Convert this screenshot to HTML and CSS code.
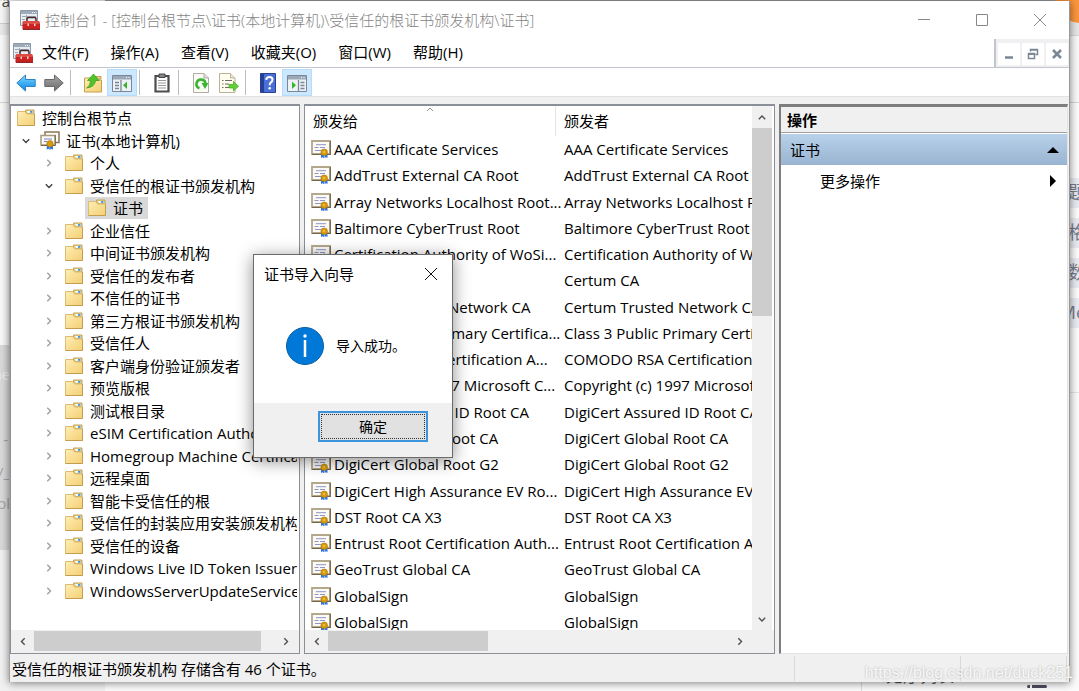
FILE: index.html
```html
<!DOCTYPE html>
<html lang="zh-CN">
<head>
<meta charset="utf-8">
<title>控制台1</title>
<link rel="stylesheet" href="styles.css">
</head>
<body>
<svg class="defs" width="0" height="0" aria-hidden="true">
  <defs>
    <linearGradient id="gFold" x1="0" y1="0" x2="1" y2="1"><stop offset="0" stop-color="#ffeeb4"/><stop offset="1" stop-color="#f3cf74"/></linearGradient>
    <linearGradient id="gBlue" x1="0" y1="0" x2="0" y2="1"><stop offset="0" stop-color="#8fd8fc"/><stop offset=".5" stop-color="#3fb0f5"/><stop offset="1" stop-color="#1583dc"/></linearGradient>
    <linearGradient id="gGray" x1="0" y1="0" x2="0" y2="1"><stop offset="0" stop-color="#a8a8a8"/><stop offset="1" stop-color="#6a6a6a"/></linearGradient>
  </defs>
  <symbol id="folder" viewBox="0 0 18 18">
    <path d="M8.500 4V1h8.500v4z" fill="#eed185" stroke="#c0a25c"/>
    <path d="M.500 2.500h7.500l1.500 2.500h8v11.500H.500z" fill="url(#gFold)" stroke="#dcbc70"/>
    <path d="M10.500 2h5.500v1.800h-5.500z" fill="#fff"/><path d="M13 2h2.500v1.800H13z" fill="#3f97d8"/>
    <path d="M17.500 5v11.500H.500" fill="none" stroke="#c49d50"/>
  </symbol>
  <symbol id="cert" viewBox="0 0 20 18">
    <path d="M1 1h18v13H1z" fill="#fbfaf6" stroke="#b3a78c" stroke-width="1.800"/>
    <path d="M19.300 1v13.500H1" fill="none" stroke="#75664a" stroke-width="1.200"/>
    <path d="M5 4.700h10M3.500 7.500h4M9 7.500h5M4 10.500h6" stroke="#8d95c9" stroke-width="1" fill="none"/>
    <path d="M10 14v4l1.500-.8 1.500.8v-4zM13.500 14v4l1.500-.8 1.500.8v-4z" fill="#2f74e0"/>
    <circle cx="13.200" cy="12.300" r="3.300" fill="#d99b0b" stroke="#a87408" stroke-width=".6"/>
    <circle cx="13" cy="12" r="1" fill="#f2c848"/>
  </symbol>
  <symbol id="certs" viewBox="0 0 20 19">
    <path d="M5 1h14v10.500H5z" fill="#fffdf8" stroke="#8b7754" stroke-width="1.500"/>
    <path d="M1 4.500h14v9.500H1z" fill="#fbfaf6" stroke="#a89a7d" stroke-width="1.500"/>
    <path d="M15.300 4v10.500H1" fill="none" stroke="#75664a"/>
    <path d="M4 8h8M4 10.500h3" stroke="#7480cf" fill="none"/>
    <path d="M6.700 14v4.700l1.500-1 1.500 1V14zM10 14v4.700l1.500-1 1.500 1V14z" fill="#2f74e0"/>
    <circle cx="10" cy="12.800" r="3.200" fill="#d99b0b" stroke="#a87408" stroke-width=".6"/>
  </symbol>
  <symbol id="mmc" viewBox="0 0 20 20">
    <path d="M.500.500h17v15H.500z" fill="#e7ecf1" stroke="#8b98a6"/>
    <path d="M1 1h16v3H1z" fill="#9dabb9"/><path d="M12 2.500h1M14 2.500h1M16 2.500h.5" stroke="#fff"/>
    <path d="M2 6.500h14M2 9.500h3M2 12.500h2M6.500 5v5" stroke="#9aa8b6"/>
    <path d="M7 11V9q0-1.500 1.500-1.500h6Q16 7.500 16 9v2" fill="none" stroke="#4c2928" stroke-width="1.500"/>
    <path d="M3.500 11h15.500l1 3v5.500H2.500V14z" fill="#cc2222"/><path d="M3.500 11h15.500l1 3H2.500z" fill="#df4a43"/>
    <path d="M3 19.300h17" stroke="#7c1012"/><path d="M7.500 13.500h1.500v2.500H7.500zM14 13.500h1.500v2.500H14z" fill="#e9d4d2"/>
  </symbol>
  <symbol id="chev" viewBox="0 0 8 8"><path d="M2.300.8 5.500 4 2.300 7.200" fill="none" stroke="currentColor" stroke-width="1.400"/></symbol>
</svg>

<div class="backdrop" aria-hidden="true">
  <div class="bd-left"><span class="bd-frag bd-ra">.ra</span><span class="bd-frag bd-ne">ne</span><span class="bd-frag bd-dash">-</span><span class="bd-frag bd-w">/_</span><span class="bd-frag bd-ol">ol</span></div>
  <div class="bd-right">
    <span class="bd-chip">标题</span><span class="bd-chip">表格</span><span class="bd-chip">数</span><span class="bd-chip">Me</span>
  </div>
  <div class="bd-orange"></div>
  <div class="bd-bottom"><span class="bd-list">无序列表</span><span class="bd-line"></span></div>
</div>

<main class="window">
  <header class="titlebar">
    <svg class="i-mmc"><use href="#mmc"/></svg>
    <h1 class="title">控制台1 - [控制台根节点\证书(本地计算机)\受信任的根证书颁发机构\证书]</h1>
    <div class="winbtns">
      <button aria-label="最小化"><svg viewBox="0 0 12 12"><path d="M0 5.500h12"/></svg></button>
      <button aria-label="最大化"><svg viewBox="0 0 12 12"><path d="M.5.5h11v11H.5z"/></svg></button>
      <button aria-label="关闭"><svg viewBox="0 0 12 12"><path d="M0 0l12 12M12 0L0 12"/></svg></button>
    </div>
  </header>

  <nav class="menubar">
    <svg class="i-mmc"><use href="#mmc"/></svg>
    <div class="menus"><button>文件(F)</button><button>操作(A)</button><button>查看(V)</button><button>收藏夹(O)</button><button>窗口(W)</button><button>帮助(H)</button></div>
    <div class="mdibtns">
      <button aria-label="最小化子窗口"><svg viewBox="0 0 12 12"><path d="M2 9.500h8" stroke-width="2.500"/></svg></button>
      <button aria-label="还原子窗口"><svg viewBox="0 0 12 12"><path d="M3.500 3.500V1.500h7v5h-2M3.500 2h7" stroke-width="1.500"/><path d="M1.500 5.500h6v5h-6zM1.500 6.200h6" stroke-width="1.500"/></svg></button>
      <button aria-label="关闭子窗口"><svg viewBox="0 0 12 12"><path d="M2 2l8 8M10 2l-8 8" stroke-width="2.500"/></svg></button>
    </div>
  </nav>

  <div class="toolbar">
    <button aria-label="后退"><svg viewBox="0 0 20 20"><path d="M.8 10 9.500 2v4.500h9.700v7H9.500V18z" fill="url(#gBlue)" stroke="#2b83c6"/></svg></button>
    <button aria-label="前进"><svg viewBox="0 0 20 20"><path d="M19.200 10 10.500 2v4.500H.8v7h9.700V18z" fill="url(#gGray)" stroke="#6a6a6a"/></svg></button>
    <i class="sep"></i>
    <button aria-label="上移一级"><svg viewBox="0 0 20 20"><path d="M11 6V3.500h7V6z" fill="#eed185" stroke="#c0a25c"/><path d="M1.500 5h6l2 2h9v12h-17z" fill="url(#gFold)" stroke="#c9a04c"/><path d="M3.500 15Q7.500 13 7.500 7.500H4.500L10.500 1l5.500 6.500h-3.500Q12 14 3.500 15z" fill="#4fc52b" stroke="#329a1b" stroke-width=".7"/></svg></button>
    <button class="on" aria-label="显示控制台树" aria-pressed="true"><svg viewBox="0 0 20 20"><path d="M.5 2.500h19v16H.5z" fill="#eef1f5" stroke="#7a8796"/><path d="M1 3h18v3.500H1z" fill="#9aa8b8"/><path d="M14 4.500h1M16.500 4.500h1" stroke="#fff"/><path d="M9 7v11M3 9.500h4M3 12.500h4M3 15.500h4" stroke="#7a8796" stroke-width="1.300"/><path d="M15 8.500v7.500l-4-3.700z" fill="#39b52a"/></svg></button>
    <i class="sep"></i>
    <button aria-label="复制"><svg viewBox="0 0 20 20"><path d="M3.500 3h13v15.500h-13z" fill="#fff" stroke="#4c4c4c" stroke-width="2.200"/><path d="M7 1h6v3.500H7z" fill="#888" stroke="#444"/><path d="M6 7.500h8M6 10h8M6 12.500h8M6 15h8" stroke="#9a9a9a"/></svg></button>
    <i class="sep"></i>
    <button aria-label="刷新"><svg viewBox="0 0 20 20"><path d="M2.500.500h10.500l4.500 4.500v14.500h-15z" fill="#fbfbf6" stroke="#b0aca0"/><path d="M13 .5V5h4.500" fill="#ddd" stroke="#b0aca0"/><path d="M8.500 15.300A4.500 4.500 0 1 1 14.500 11" fill="none" stroke="#38b531" stroke-width="2.600"/><path d="M17.500 10h-7l3.500 6z" fill="#38b531"/></svg></button>
    <button aria-label="导出列表"><svg viewBox="0 0 20 20"><path d="M.500.500h11l4.500 4.500v14.500H.500z" fill="#fffdf0" stroke="#b9b398"/><path d="M11.500.5V5H16" fill="#eee8cf" stroke="#b9b398"/><path d="M3 7.500h1.500M6 7.500h7M3 11h1.500M6 11h4M3 14.500h1.500M6 14.500h4" stroke="#6d6b62"/><path d="M10 11.500h4.500V8.500l5 4.700-5 4.800v-3H10z" fill="#62cf37" stroke="#3ea620" stroke-width=".7"/></svg></button>
    <i class="sep"></i>
    <button aria-label="帮助"><svg viewBox="0 0 20 20"><path d="M2.500.500h15v19h-15z" fill="#4a6fd6" stroke="#28408f"/><path d="M3 1h3v18H3z" fill="#263f98"/><path d="M8.200 6.800Q8.500 4 11.500 4t3 2.700q0 1.700-1.600 2.700-1.200.8-1.200 2.800" fill="none" stroke="#fff" stroke-width="2"/><circle cx="11.700" cy="15.300" r="1.300" fill="#fff"/></svg></button>
    <button class="on" aria-label="显示操作窗格" aria-pressed="true"><svg viewBox="0 0 20 20"><path d="M.5 2.500h19v16H.5z" fill="#eef1f5" stroke="#7a8796"/><path d="M1 3h18v3.500H1z" fill="#9aa8b8"/><path d="M14 4.500h1M16.500 4.500h1" stroke="#fff"/><path d="M11.500 7v11M13.500 9.500h4M13.500 12.500h4M13.500 15.500h4" stroke="#7a8796" stroke-width="1.300"/><path d="M5 8.500v7.500l4-3.700z" fill="#39b52a"/></svg></button>
  </div>

  <div class="panes">
    <section class="pane tree-pane" aria-label="控制台树">
      <ul class="tree">
        <li class="l0"><svg class="i-f"><use href="#folder"/></svg><span>控制台根节点</span></li>
        <li class="l1 open"><svg class="i-c"><use href="#chev"/></svg><svg class="i-certs"><use href="#certs"/></svg><span>证书(本地计算机)</span></li>
        <li class="l2"><svg class="i-c"><use href="#chev"/></svg><svg class="i-f"><use href="#folder"/></svg><span>个人</span></li>
        <li class="l2 open"><svg class="i-c"><use href="#chev"/></svg><svg class="i-f"><use href="#folder"/></svg><span>受信任的根证书颁发机构</span></li>
        <li class="l3"><div class="sel"><svg class="i-f"><use href="#folder"/></svg><span>证书</span></div></li>
        <li class="l2"><svg class="i-c"><use href="#chev"/></svg><svg class="i-f"><use href="#folder"/></svg><span>企业信任</span></li>
        <li class="l2"><svg class="i-c"><use href="#chev"/></svg><svg class="i-f"><use href="#folder"/></svg><span>中间证书颁发机构</span></li>
        <li class="l2"><svg class="i-c"><use href="#chev"/></svg><svg class="i-f"><use href="#folder"/></svg><span>受信任的发布者</span></li>
        <li class="l2"><svg class="i-c"><use href="#chev"/></svg><svg class="i-f"><use href="#folder"/></svg><span>不信任的证书</span></li>
        <li class="l2"><svg class="i-c"><use href="#chev"/></svg><svg class="i-f"><use href="#folder"/></svg><span>第三方根证书颁发机构</span></li>
        <li class="l2"><svg class="i-c"><use href="#chev"/></svg><svg class="i-f"><use href="#folder"/></svg><span>受信任人</span></li>
        <li class="l2"><svg class="i-c"><use href="#chev"/></svg><svg class="i-f"><use href="#folder"/></svg><span>客户端身份验证颁发者</span></li>
        <li class="l2"><svg class="i-c"><use href="#chev"/></svg><svg class="i-f"><use href="#folder"/></svg><span>预览版根</span></li>
        <li class="l2"><svg class="i-c"><use href="#chev"/></svg><svg class="i-f"><use href="#folder"/></svg><span>测试根目录</span></li>
        <li class="l2"><svg class="i-c"><use href="#chev"/></svg><svg class="i-f"><use href="#folder"/></svg><span>eSIM Certification Authorities</span></li>
        <li class="l2"><svg class="i-c"><use href="#chev"/></svg><svg class="i-f"><use href="#folder"/></svg><span>Homegroup Machine Certificates</span></li>
        <li class="l2"><svg class="i-c"><use href="#chev"/></svg><svg class="i-f"><use href="#folder"/></svg><span>远程桌面</span></li>
        <li class="l2"><svg class="i-c"><use href="#chev"/></svg><svg class="i-f"><use href="#folder"/></svg><span>智能卡受信任的根</span></li>
        <li class="l2"><svg class="i-c"><use href="#chev"/></svg><svg class="i-f"><use href="#folder"/></svg><span>受信任的封装应用安装颁发机构</span></li>
        <li class="l2"><svg class="i-c"><use href="#chev"/></svg><svg class="i-f"><use href="#folder"/></svg><span>受信任的设备</span></li>
        <li class="l2"><svg class="i-c"><use href="#chev"/></svg><svg class="i-f"><use href="#folder"/></svg><span>Windows Live ID Token Issuer</span></li>
        <li class="l2"><svg class="i-c"><use href="#chev"/></svg><svg class="i-f"><use href="#folder"/></svg><span>WindowsServerUpdateServices</span></li>
      </ul>
      <div class="hscroll"><svg class="arr left"><use href="#chev"/></svg><div class="track"><div class="thumb tree-thumb"></div></div><svg class="arr"><use href="#chev"/></svg></div>
    </section>

    <section class="pane list-pane" aria-label="证书列表">
      <div class="list-main">
        <div class="list-view">
          <table class="certs">
            <thead><tr><th scope="col">颁发给<svg class="sort" viewBox="0 0 8 5"><path d="M1 4l3-3 3 3"/></svg></th><th scope="col">颁发者</th></tr></thead>
            <tbody>
              <tr><td><svg class="i-cert"><use href="#cert"/></svg><span>AAA Certificate Services</span></td><td>AAA Certificate Services</td></tr>
              <tr><td><svg class="i-cert"><use href="#cert"/></svg><span>AddTrust External CA Root</span></td><td>AddTrust External CA Root</td></tr>
              <tr><td><svg class="i-cert"><use href="#cert"/></svg><span>Array Networks Localhost Root...</span></td><td>Array Networks Localhost Root</td></tr>
              <tr><td><svg class="i-cert"><use href="#cert"/></svg><span>Baltimore CyberTrust Root</span></td><td>Baltimore CyberTrust Root</td></tr>
              <tr><td><svg class="i-cert"><use href="#cert"/></svg><span>Certification Authority of WoSi...</span></td><td>Certification Authority of WoSign</td></tr>
              <tr><td><svg class="i-cert"><use href="#cert"/></svg><span>Certum CA</span></td><td>Certum CA</td></tr>
              <tr><td><svg class="i-cert"><use href="#cert"/></svg><span>Certum Trusted Network CA</span></td><td>Certum Trusted Network CA</td></tr>
              <tr><td><svg class="i-cert"><use href="#cert"/></svg><span>Class 3 Public Primary Certifica...</span></td><td>Class 3 Public Primary Certificat</td></tr>
              <tr><td><svg class="i-cert"><use href="#cert"/></svg><span>COMODO RSA Certification A...</span></td><td>COMODO RSA Certification Au</td></tr>
              <tr><td><svg class="i-cert"><use href="#cert"/></svg><span>Copyright (c) 1997 Microsoft C...</span></td><td>Copyright (c) 1997 Microsoft C</td></tr>
              <tr><td><svg class="i-cert"><use href="#cert"/></svg><span>DigiCert Assured ID Root CA</span></td><td>DigiCert Assured ID Root CA</td></tr>
              <tr><td><svg class="i-cert"><use href="#cert"/></svg><span>DigiCert Global Root CA</span></td><td>DigiCert Global Root CA</td></tr>
              <tr><td><svg class="i-cert"><use href="#cert"/></svg><span>DigiCert Global Root G2</span></td><td>DigiCert Global Root G2</td></tr>
              <tr><td><svg class="i-cert"><use href="#cert"/></svg><span>DigiCert High Assurance EV Ro...</span></td><td>DigiCert High Assurance EV Root</td></tr>
              <tr><td><svg class="i-cert"><use href="#cert"/></svg><span>DST Root CA X3</span></td><td>DST Root CA X3</td></tr>
              <tr><td><svg class="i-cert"><use href="#cert"/></svg><span>Entrust Root Certification Auth...</span></td><td>Entrust Root Certification Authority</td></tr>
              <tr><td><svg class="i-cert"><use href="#cert"/></svg><span>GeoTrust Global CA</span></td><td>GeoTrust Global CA</td></tr>
              <tr><td><svg class="i-cert"><use href="#cert"/></svg><span>GlobalSign</span></td><td>GlobalSign</td></tr>
              <tr><td><svg class="i-cert"><use href="#cert"/></svg><span>GlobalSign</span></td><td>GlobalSign</td></tr>
            </tbody>
          </table>
        </div>
        <div class="vscroll"><svg class="arr up"><use href="#chev"/></svg><div class="track vtrack"><div class="thumb list-vthumb"></div></div><svg class="arr down"><use href="#chev"/></svg></div>
      </div>
      <div class="hscroll list-h"><svg class="arr left"><use href="#chev"/></svg><div class="track"><div class="thumb list-thumb"></div></div><svg class="arr"><use href="#chev"/></svg></div>
    </section>

    <aside class="actions">
      <h2 class="act-head">操作</h2>
      <button class="act-group">证书<svg viewBox="0 0 12 12"><path d="M0 9l6-6 6 6z"/></svg></button>
      <button class="act-item">更多操作<svg viewBox="0 0 12 12"><path d="M3 0l6 6-6 6z"/></svg></button>
    </aside>
  </div>

  <footer class="status"><span class="status-text">受信任的根证书颁发机构 存储含有 46 个证书。</span><i></i><i></i></footer>
</main>

<div class="dialog" role="dialog" aria-labelledby="dlg-title">
  <div class="dlg-head"><h2 id="dlg-title">证书导入向导</h2><button class="dlg-x" aria-label="关闭"><svg viewBox="0 0 12 12"><path d="M0 0l12 12M12 0L0 12"/></svg></button></div>
  <div class="dlg-body"><svg class="i-info" viewBox="0 0 38 38"><circle cx="19" cy="19" r="18.500" fill="#0078d7" stroke="#0b5fa5"/><path d="M19 13v17" stroke="#fff" stroke-width="2.500"/><circle cx="19" cy="9" r="1.700" fill="#fff"/></svg><p>导入成功。</p></div>
  <div class="dlg-foot"><button class="ok">确定</button></div>
</div>
<div class="watermark">https://blog.csdn.net/duck251</div>
</body>
</html>
```
FILE: styles.css
```css
* { box-sizing: border-box; }
html, body { height: 100%; }
body {
  margin: 0;
  position: relative;
  overflow: hidden;
  display: flex;
  padding: 1px 9px 9px;
  background: #fbfbfb;
  color: #000;
  font: 15px/22px "Open Sans", "Noto Sans CJK SC", sans-serif;
}
button { font: inherit; color: inherit; border: 0; padding: 0; background: none; display: flex; align-items: center; justify-content: center; }
h1, h2, p, ul { margin: 0; padding: 0; font: inherit; }
svg { display: block; flex: none; }
.defs { position: absolute; }

/* page behind the window */
.backdrop { position: absolute; inset: 0; overflow: hidden; color: #777b8c; background: linear-gradient(#999 0 1px, transparent 1px); }
.bd-left { position: absolute; left: 0; top: 0; bottom: 0; width: 105px; background: linear-gradient(#f6f6f6 0 23px, #cfcfcf 23px 24px, #e9e9e9 24px 35px, #f8f8f8 35px 102px, #d5d5d5 102px 103px, #f8f8f8 103px 345px, #d9d9d9 345px 550px, #f1f1f1 550px); }
.bd-frag { position: absolute; right: 95px; color: #a5a5a5; line-height: 20px; }
.bd-ra { top: -9px; color: #444; }
.bd-ne { top: 364px; color: #eee; }
.bd-dash { top: 429px; right: 97px; }
.bd-w { top: 462px; }
.bd-ol { top: 493px; }
.bd-right { position: absolute; right: 0; top: 0; bottom: 0; width: 12px; padding-top: 178px; display: flex; flex-direction: column; align-items: flex-end; gap: 10px; background: linear-gradient(#e6e6e6 0 35px, #d5d5d5 35px 36px, #f8f8f8 36px 102px, #d5d5d5 102px 103px, transparent 103px 392px, #e5e5e5 392px 393px, transparent 393px); }
.bd-chip { height: 30px; line-height: 28px; background: #e9ebf2; font-size: 18px; white-space: nowrap; margin-right: -7px; padding-left: 12px; }
.bd-orange { position: absolute; right: -26px; top: -27px; width: 50px; height: 50px; border-radius: 50%; background: #fb963c; }
.bd-bottom { position: absolute; left: 861px; right: 0; bottom: 0; height: 30px; padding: 4px 32px 0 24px; border-left: 1px solid #ddd; display: flex; justify-content: space-between; font-size: 17px; color: #555; }
.bd-line { width: 20px; height: 3px; margin-top: 20px; border-radius: 2px; background: linear-gradient(90deg, #4c4c60 0 3px, transparent 3px 5px, #4c4c60 5px); }

/* console window */
.window { position: relative; flex: 1; min-width: 0; display: flex; flex-direction: column; background: #f0f0f0; border-left: 1px solid #a0a0a0; border-right: 1px solid #999; box-shadow: 0 1px 8px rgba(0, 0, 0, .5); }
.titlebar { height: 38px; flex: none; display: flex; align-items: center; background: #fff; padding-left: 10px; gap: 5px; }
.i-mmc { width: 20px; height: 20px; }
.title { flex: 1; color: #858585; font-weight: 300; white-space: nowrap; }
.winbtns { display: flex; }
.winbtns button { width: 58px; height: 38px; }
.winbtns svg, .dlg-x svg { width: 12px; height: 12px; fill: none; stroke: #888; }
.menubar { height: 29px; flex: none; display: flex; align-items: center; background: #fff; padding-left: 3px; border-bottom: 1px solid #c0c6cc; }
.menus { flex: 1; display: flex; gap: 22px; padding: 0 0 2px 9px; white-space: nowrap; }
.mdibtns { display: flex; align-self: stretch; align-items: center; gap: 2px; padding: 2px 1px 0 2px; border-left: 2px solid #c0c6cc; background: #f0f0f3; }
.mdibtns button { width: 22px; height: 22px; background: #fff; }
.mdibtns svg { width: 12px; height: 12px; fill: none; stroke: #7b8794; }
.toolbar { height: 29px; flex: none; display: flex; align-items: center; background: #fff; border-bottom: 1px solid #e3e3e3; padding: 1px 0 0 2px; }
.toolbar button { width: 28px; height: 27px; }
.toolbar button svg { width: 20px; height: 20px; }
.toolbar .on { width: 30px; background: #cce8ff; border: 1px solid #b5dcfa; }
.sep { width: 1px; height: 25px; margin: 0 8px 0 2px; background: #bdbdbd; }

.panes { flex: 1; min-height: 0; display: grid; grid-template-columns: 290px minmax(0, 471px) minmax(0, 1fr); gap: 4px; padding: 7px 1px 0 0; }
.pane { min-width: 0; min-height: 0; display: flex; flex-direction: column; background: #fff; border: 1px solid #8a8f98; border-top-width: 2px; overflow: hidden; }
.tree { flex: 1; min-height: 0; display: grid; grid-auto-rows: 1fr; list-style: none; padding: 1px 0 28px; margin-right: 2px; overflow: hidden; }
.tree li { display: flex; align-items: center; white-space: nowrap; min-height: 0; }
.i-f { width: 18px; height: 18px; margin-right: 7px; }
.i-certs { width: 20px; height: 19px; margin: 0 6px 0 5px; }
.i-c { width: 8px; height: 8px; margin-right: 12px; color: #a0a0a0; }
.open .i-c { transform: rotate(90deg); color: #404040; }
.open .i-certs { margin-left: -2px; }
.l0 { padding-left: 6px; }
.l1 { padding-left: 11px; }
.l2 { padding-left: 34px; }
.l3 { padding-left: 74px; }
.sel { display: flex; align-items: center; background: #d9d9d9; padding: 0 5px 0 3px; }

.hscroll { height: 23px; flex: none; display: flex; align-items: center; gap: 7px; padding: 1px 9px 2px 8px; background: #f0f0f0; }
.track { flex: 1; align-self: stretch; min-width: 0; min-height: 0; }
.vtrack { align-self: auto; width: 20px; }
.thumb { height: 100%; background: #cdcdcd; }
.tree-thumb { width: 94%; }
.list-thumb { width: 40%; }
.list-h { padding-right: 30px; }
.arr { width: 8px; height: 9px; color: #505050; }
.left { transform: rotate(180deg); }
.up { transform: rotate(-90deg); }
.down { transform: rotate(90deg); }
.list-main { flex: 1; min-height: 0; display: flex; }
.list-view { flex: 1; min-width: 0; overflow: hidden; display: flex; }
.vscroll { width: 20px; flex: none; display: flex; flex-direction: column; align-items: center; gap: 6px; padding: 7px 0 6px; background: #f0f0f0; margin-right: 2px; }
.thumb.list-vthumb { height: 39%; }

.certs { flex: 1; min-width: 0; display: flex; flex-direction: column; margin-bottom: -5px; }
.certs thead, .certs td, .certs th { display: block; }
.certs tr { display: grid; grid-template-columns: 251px minmax(0, 1fr); min-height: 0; }
.certs tbody { flex: 1; min-height: 0; display: grid; grid-auto-rows: 1fr; }
.certs th { height: 30px; padding: 4px 8px 0; text-align: left; font-weight: 400; position: relative; }
.certs th:first-child { border-right: 1px solid #e5e5e5; }
.sort { position: absolute; left: calc(50% - 4px); top: 1px; width: 8px; height: 5px; fill: none; stroke: #909090; }
.certs td { display: flex; align-items: center; padding: 0 0 0 8px; line-height: 20px; white-space: nowrap; min-width: 0; }
.certs td:first-child { padding-left: 6px; gap: 3px; }
.i-cert { width: 20px; height: 18px; }

.actions { min-width: 0; background: #fff; border: 1px solid #e3e3e3; border-top: 3px solid #7d7d7d; border-left: 2px solid #7d7d7d; display: flex; flex-direction: column; }
.act-head { height: 26px; line-height: 26px; padding-left: 6px; font-weight: 700; background: #f0f0f0; border-bottom: 1px solid #a0a0a0; }
.act-group, .act-item { justify-content: space-between; height: 31px; padding: 0 8px 0 9px; text-align: left; }
.act-group { margin-top: 1px; background: linear-gradient(#b9d1ea, #99b4d1); }
.act-item { padding-left: 39px; }
.actions svg { width: 12px; height: 12px; }

.status { height: 28px; flex: none; display: flex; align-items: center; padding: 2px 2px 1px; }
.status-text { flex: 1; }
.status i { align-self: stretch; width: 166px; border-left: 1px solid #d9d9d9; }
.status i:last-child { width: 107px; border-right: 1px solid #d9d9d9; }

/* message box floating over the console */
.dialog { position: absolute; left: 253px; top: 254px; width: 200px; display: flex; flex-direction: column; background: #fff; border: 1px solid #6a6a6a; box-shadow: 0 3px 16px rgba(0, 0, 0, .45); }
.dlg-head { height: 38px; display: flex; align-items: center; justify-content: space-between; padding: 0 15px 0 10px; }
.dlg-x svg { stroke: #111; }
.dlg-body { height: 110px; display: flex; align-items: center; gap: 12px; padding: 0 0 4px 32px; font-size: 14px; }
.i-info { width: 38px; height: 38px; }
.dlg-foot { display: flex; justify-content: flex-end; padding: 8px 24px 15px; background: #f0f0f0; }
.ok { width: 110px; height: 31px; font-size: 14px; background: #e1e1e1; border: 2px solid #3c94dc; outline: 1px dotted #333; outline-offset: -4px; }
.watermark { position: absolute; right: 6px; bottom: 7px; font: 16px/22px "Liberation Sans", Arial, sans-serif; color: rgba(255, 255, 255, .9); text-shadow: 0 0 2px #aaa; }
```
